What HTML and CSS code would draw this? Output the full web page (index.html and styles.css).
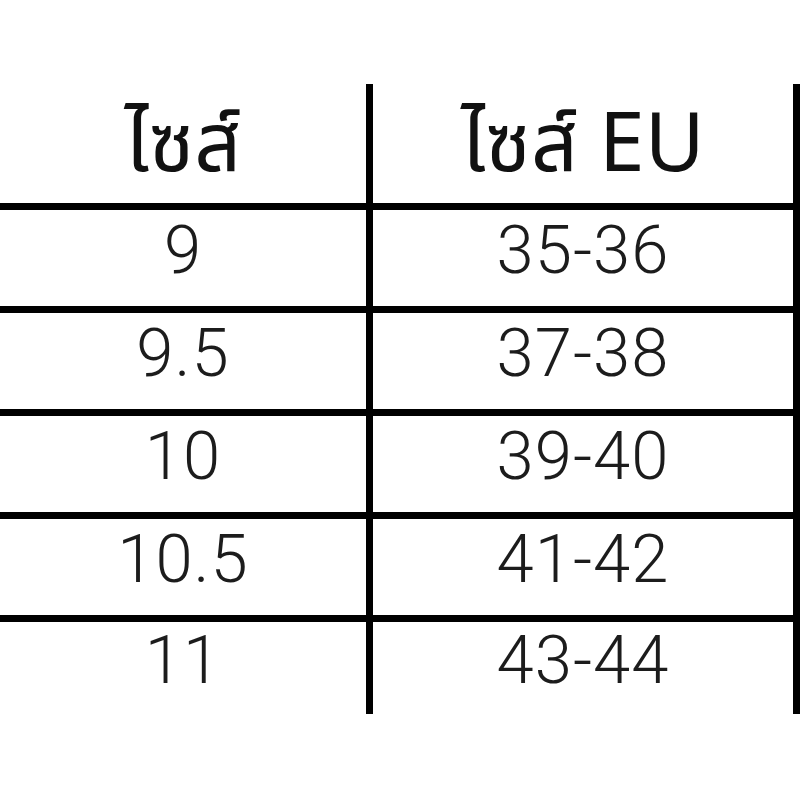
FILE: index.html
```html
<!DOCTYPE html>
<html lang="th">
<head>
<meta charset="utf-8">
<title>ตารางไซส์</title>
<link rel="stylesheet" href="styles.css">
</head>
<body>
<div class="page">
  <div class="table">
    <div class="row head">
      <div class="cell c1">ไซส์</div>
      <div class="cell c2">ไซส์ EU</div>
    </div>
    <div class="row">
      <div class="cell c1">9</div>
      <div class="cell c2">35-36</div>
    </div>
    <div class="row">
      <div class="cell c1">9.5</div>
      <div class="cell c2">37-38</div>
    </div>
    <div class="row">
      <div class="cell c1">10</div>
      <div class="cell c2">39-40</div>
    </div>
    <div class="row">
      <div class="cell c1">10.5</div>
      <div class="cell c2">41-42</div>
    </div>
    <div class="row last">
      <div class="cell c1">11</div>
      <div class="cell c2">43-44</div>
    </div>
  </div>
</div>
</body>
</html>
```

FILE: styles.css
```css
html, body {
  margin: 0;
  padding: 0;
  background: #ffffff;
}

.page {
  width: 800px;
  height: 800px;
  padding-top: 84px;
  box-sizing: border-box;
  overflow: hidden;
}

.table {
  display: flex;
  flex-direction: column;
  width: 800px;
}

.row {
  display: flex;
  height: 96px;
  border-bottom: 7px solid #000;
}

.row.head {
  height: 119px;
}

.row.last {
  height: 92px;
  border-bottom: none;
}

.cell {
  display: flex;
  align-items: center;
  justify-content: center;
  font-family: "Roboto", "Noto Sans Thai", "Noto Sans", sans-serif;
  font-weight: 300;
  font-size: 67px;
  letter-spacing: 1px;
  line-height: 1;
  color: #1c1c1c;
  padding-bottom: 16px;
  box-sizing: border-box;
}

.head .cell {
  font-family: "Noto Sans Thai", "Noto Sans", sans-serif;
  font-size: 82px;
  font-weight: 400;
  letter-spacing: 0;
  color: #111;
  padding-top: 5px;
  padding-bottom: 0;
}

.c1 {
  width: 366px;
}

.c2 {
  width: 434px;
  border-left: 7px solid #000;
  border-right: 7px solid #000;
}
```
